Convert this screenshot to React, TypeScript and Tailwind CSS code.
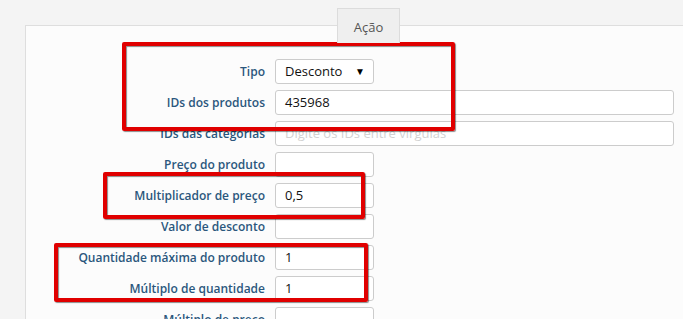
import React from 'react';

interface Row {
  label: string;
  value?: string;
  placeholder?: string;
  wide?: boolean;
  select?: boolean;
}

const rows: Row[] = [
  { label: 'Tipo', value: 'Desconto', select: true },
  { label: 'IDs dos produtos', value: '435968', wide: true },
  { label: 'IDs das categorias', placeholder: 'Digite os IDs entre vírgulas', wide: true },
  { label: 'Preço do produto' },
  { label: 'Multiplicador de preço', value: '0,5' },
  { label: 'Valor de desconto' },
  { label: 'Quantidade máxima do produto', value: '1' },
  { label: 'Múltiplo de quantidade', value: '1' },
  { label: 'Múltiplo de preço' },
];

const highlights = [
  'left-[122px] top-[42px] w-[333px] h-[89px]',
  'left-[103px] top-[172px] w-[262px] h-[47px]',
  'left-[54px] top-[243px] w-[314px] h-[59px]',
];

const FormRow: React.FC<{ row: Row }> = ({ row }) => (
  <div className="flex items-center h-[25px]">
    <label className="w-[249px] pr-[10px] text-right text-[12px] font-semibold text-[#2b577d] whitespace-nowrap">
      {row.label}
    </label>
    <div
      className={`h-[25px] ${row.wide ? 'w-[399px]' : 'w-[99px]'} bg-white border border-[#ccc] rounded-[3px] flex items-center justify-between px-[9px] text-[13px] text-[#111]`}
    >
      {row.value && <span>{row.value}</span>}
      {row.placeholder && <span className="text-[#d2d2d2]">{row.placeholder}</span>}
      {row.select && <span className="text-[10px] text-black -mr-[1px]">▼</span>}
    </div>
  </div>
);

export default function App() {
  return (
    <div className="relative w-[683px] h-[319px] overflow-hidden bg-[#f4f4f4] font-['Open_Sans',sans-serif]">
      <div className="pl-[25px] pt-[8px]">
        <div className="relative z-10 ml-[312px] -mb-[18px] w-[63px] h-[35px] bg-[#efefef] border border-b-0 border-[#dcdcdc] flex justify-center pt-[9px] text-[13px] text-[#555]">
          Ação
        </div>
        <div className="w-[700px] bg-[#fcfcfc] border border-[#dedede] pt-[33px] flex flex-col gap-[6px] pb-[20px]">
          {rows.map((r) => (
            <FormRow key={r.label} row={r} />
          ))}
        </div>
      </div>
      {highlights.map((h) => (
        <div
          key={h}
          className={`absolute ${h} border-[4px] border-[#e00000] rounded-[2px] shadow-[1px_1px_1px_rgba(0,0,0,0.45),inset_1px_1px_1px_rgba(0,0,0,0.45)]`}
        />
      ))}
    </div>
  );
}
